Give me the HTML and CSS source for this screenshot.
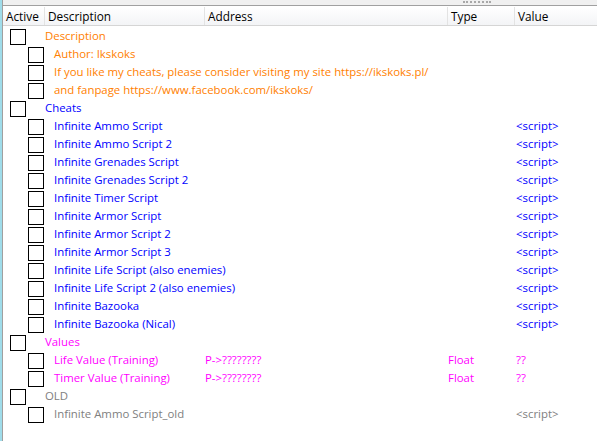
FILE: index.html
```html
<!DOCTYPE html>
<html>
<head>
<meta charset="utf-8">
<link rel="stylesheet" href="styles.css">
</head>
<body>
<div class="frame">
  <div class="topbar"><span class="grip"></span></div>
  <div class="list">
    <div class="header">
      <div class="hcell">Active</div>
      <div class="hcell">Description</div>
      <div class="hcell">Address</div>
      <div class="hcell">Type</div>
      <div class="hcell last">Value</div>
    </div>

    <div class="row orange"><div class="desc top"><span class="cb"></span><span>Description</span></div></div>
    <div class="row orange"><div class="desc child"><span class="cb"></span><span>Author: Ikskoks</span></div></div>
    <div class="row orange"><div class="desc child"><span class="cb"></span><span>If you like my cheats, please consider visiting my site https://ikskoks.pl/</span></div></div>
    <div class="row orange"><div class="desc child"><span class="cb"></span><span>and fanpage https://www.facebook.com/ikskoks/</span></div></div>

    <div class="row blue"><div class="desc top"><span class="cb"></span><span>Cheats</span></div></div>
    <div class="row blue"><div class="desc child"><span class="cb"></span><span>Infinite Ammo Script</span></div><div class="val">&lt;script&gt;</div></div>
    <div class="row blue"><div class="desc child"><span class="cb"></span><span>Infinite Ammo Script 2</span></div><div class="val">&lt;script&gt;</div></div>
    <div class="row blue"><div class="desc child"><span class="cb"></span><span>Infinite Grenades Script</span></div><div class="val">&lt;script&gt;</div></div>
    <div class="row blue"><div class="desc child"><span class="cb"></span><span>Infinite Grenades Script 2</span></div><div class="val">&lt;script&gt;</div></div>
    <div class="row blue"><div class="desc child"><span class="cb"></span><span>Infinite Timer Script</span></div><div class="val">&lt;script&gt;</div></div>
    <div class="row blue"><div class="desc child"><span class="cb"></span><span>Infinite Armor Script</span></div><div class="val">&lt;script&gt;</div></div>
    <div class="row blue"><div class="desc child"><span class="cb"></span><span>Infinite Armor Script 2</span></div><div class="val">&lt;script&gt;</div></div>
    <div class="row blue"><div class="desc child"><span class="cb"></span><span>Infinite Armor Script 3</span></div><div class="val">&lt;script&gt;</div></div>
    <div class="row blue"><div class="desc child"><span class="cb"></span><span>Infinite Life Script (also enemies)</span></div><div class="val">&lt;script&gt;</div></div>
    <div class="row blue"><div class="desc child"><span class="cb"></span><span>Infinite Life Script 2 (also enemies)</span></div><div class="val">&lt;script&gt;</div></div>
    <div class="row blue"><div class="desc child"><span class="cb"></span><span>Infinite Bazooka</span></div><div class="val">&lt;script&gt;</div></div>
    <div class="row blue"><div class="desc child"><span class="cb"></span><span>Infinite Bazooka (Nical)</span></div><div class="val">&lt;script&gt;</div></div>

    <div class="row magenta"><div class="desc top"><span class="cb"></span><span>Values</span></div></div>
    <div class="row magenta"><div class="desc child"><span class="cb"></span><span>Life Value (Training)</span></div><div class="addr">P-&gt;????????</div><div class="type">Float</div><div class="val">??</div></div>
    <div class="row magenta"><div class="desc child"><span class="cb"></span><span>Timer Value (Training)</span></div><div class="addr">P-&gt;????????</div><div class="type">Float</div><div class="val">??</div></div>

    <div class="row gray"><div class="desc top"><span class="cb"></span><span>OLD</span></div></div>
    <div class="row gray"><div class="desc child"><span class="cb"></span><span>Infinite Ammo Script_old</span></div><div class="val">&lt;script&gt;</div></div>
  </div>
</div>
</body>
</html>
```

FILE: styles.css
```css
html, body {
  margin: 0;
  padding: 0;
  background: #ffffff;
}
body {
  font-family: "Open Sans", "Liberation Sans", sans-serif;
  font-size: 11.4px;
  width: 597px;
  height: 441px;
  overflow: hidden;
}
.frame {
  height: 441px;
  border-left: 2px solid #9fdcea;
  box-sizing: border-box;
  display: flex;
  flex-direction: column;
}
.topbar {
  height: 5px;
  background: #f0f0f0;
  border-bottom: 1px solid #a0a0a0;
  border-left: 1px solid #a0a0a0;
  position: relative;
}
.grip {
  position: absolute;
  left: 460px;
  top: 1px;
  width: 28px;
  height: 0;
  border-top: 2px dotted #a8a8a8;
}
.list {
  flex: 1;
  border-left: 1px solid #a0a0a0;
  padding-top: 1px;
}
.header {
  display: grid;
  grid-template-columns: 42px 160px 243px 67px 1fr;
  height: 18px;
  background: linear-gradient(#ffffff, #f3f4f6);
  border-bottom: 1px solid #d5d5d5;
}
.hcell {
  color: #000000;
  font-size: 11.8px;
  line-height: 18px;
  padding-left: 3px;
  border-right: 1px solid #e3e3e3;
  white-space: nowrap;
}
.hcell.last {
  border-right: none;
}
.row {
  display: grid;
  grid-template-columns: 42px 160px 243px 67px 1fr;
  height: 18px;
  line-height: 19px;
  white-space: nowrap;
}
.desc {
  grid-column: 1 / 3;
  display: flex;
  align-items: center;
  overflow: visible;
}
.cb {
  width: 14px;
  height: 14px;
  border: 1px solid #000000;
  background: #ffffff;
  flex: none;
  margin-top: 2px;
}
.top .cb {
  margin-left: 7px;
  margin-right: 19px;
}
.child .cb {
  margin-left: 25px;
  margin-right: 10px;
}
.addr {
  grid-column: 3;
}
.type {
  grid-column: 4;
}
.val {
  grid-column: 5;
  padding-left: 1px;
}
.orange { color: #ff8000; }
.blue { color: #0000ff; }
.magenta { color: #ff00ff; }
.gray { color: #808080; }
```
